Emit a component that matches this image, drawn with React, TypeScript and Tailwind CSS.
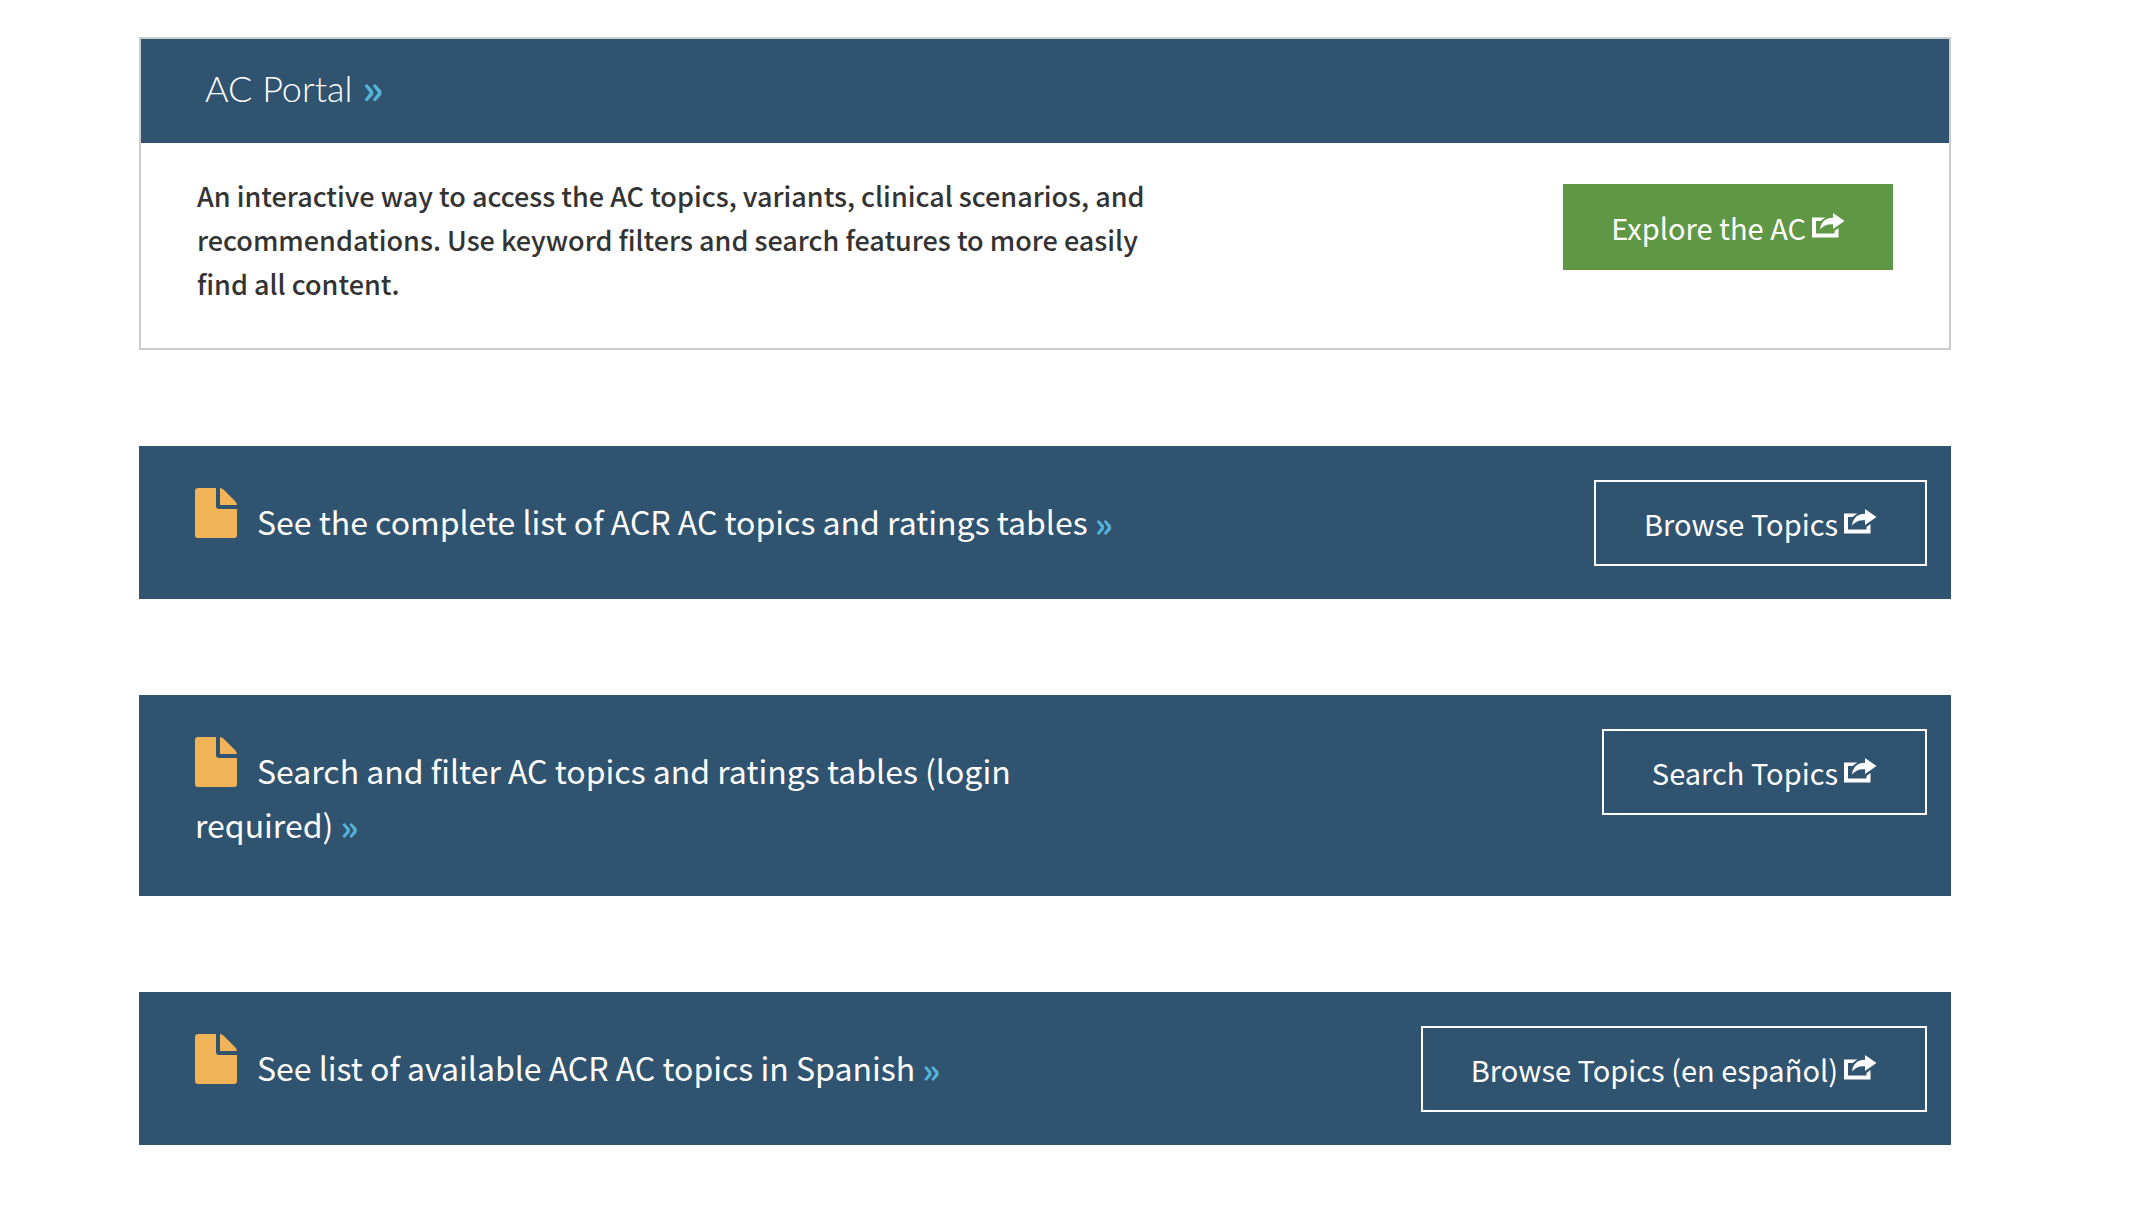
import type { ReactNode } from 'react';

const FileIcon = () => (
  <svg
    className="mr-5 inline-block h-[50px] w-[42px] align-[-3px] text-[#f0b357]"
    viewBox="0 0 42 50"
    fill="currentColor"
    aria-hidden="true"
  >
    <path d="M3 0H21V18Q21 21 24 21H42V47Q42 50 39 50H3Q0 50 0 47V3Q0 0 3 0Z" />
    <path d="M25 0Q27.500 .3 29 2L40 13Q41.700 14.700 42 17H25Z" />
  </svg>
);

const ShareIcon = () => (
  <svg className="mb-1 ml-1.5 h-[25px] w-[33px]" viewBox="0 0 33 25" fill="currentColor" aria-hidden="true">
    <path d="M0 4.500H13.500Q10.500 6 8.700 8H4V20.500H22.500V18L26.500 15V24.500H0Z" />
    <path d="M21 0L32.500 8L21 16V11.200Q13 10.500 8 16.500Q9.500 5 21 4.800Z" />
  </svg>
);

const Arrows = ({ className }: { className: string }) => (
  <span className={`align-[-2px] leading-none font-bold text-[#55b4d9] ${className}`}>»</span>
);

const Banner = ({ text, button }: { text: ReactNode; button: string }) => (
  <section className="mt-24 flex items-start justify-between bg-[#30536f] pt-[34px] pr-6 pb-[33px] pl-14 text-white">
    <h2 className="max-w-[960px] pt-2 pb-3 text-[32px] leading-[54px]">
      <a href="#">
        <FileIcon />
        {text} <Arrows className="text-[34px]" />
      </a>
    </h2>
    <a href="#" className="flex h-[86px] items-center border-2 border-white px-12 text-[29px] leading-10">
      {button}
      <ShareIcon />
    </a>
  </section>
);

const App = () => {
  return (
    <main className="min-h-screen bg-white pt-[37px] pr-[191px] pb-[76px] pl-[139px] font-['Noto_Sans_CJK_SC',sans-serif]">
      <section className="border-2 border-[#cccccc]">
        <h2 className="bg-[#30536f] px-16 pt-[21px] pb-[27px] font-['Lato',sans-serif] text-[36px] leading-14 font-light text-white">
          <a href="#">
            AC Portal <Arrows className="font-['Noto_Sans_CJK_SC'] text-[40px]" />
          </a>
        </h2>
        <div className="flex items-start justify-between px-14 pt-[31px] pb-[42px]">
          <p className="max-w-[960px] text-[27px] leading-11 font-medium text-[#333333]">
            An interactive way to access the AC topics, variants, clinical scenarios, and recommendations. Use keyword
            filters and search features to more easily find all content.
          </p>
          <a
            href="#"
            className="mt-2.5 flex h-[86px] items-center bg-[#5f9745] px-12 text-[29px] leading-10 text-white"
          >
            Explore the AC
            <ShareIcon />
          </a>
        </div>
      </section>

      <Banner text="See the complete list of ACR AC topics and ratings tables" button="Browse Topics" />
      <Banner text="Search and filter AC topics and ratings tables (login required)" button="Search Topics" />
      <Banner text="See list of available ACR AC topics in Spanish" button="Browse Topics (en español)" />
    </main>
  );
};

export default App;
